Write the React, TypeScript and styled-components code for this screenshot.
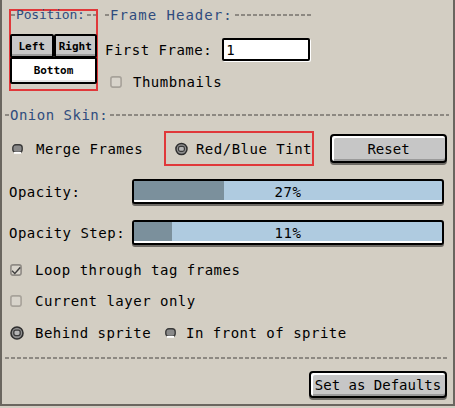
import React from "react";
import styled, { createGlobalStyle } from "styled-components";

const GlobalStyle = createGlobalStyle`
  html, body { margin: 0; padding: 0; background: #d3cec3; }
  body {
    font-family: "DejaVu Sans Mono", "Liberation Mono", monospace;
    font-size: 14px;
    letter-spacing: 0.5px;
    color: #000;
  }
`;

const Panel = styled.div`
  width: 455px;
  height: 406px;
  box-sizing: border-box;
  padding: 0 4px 0 3px;
  background: #d3cec3;
  border-left: 2px solid #6a665f;
  border-right: 2px solid #6a665f;
  border-bottom: 2px solid #6a665f;
  display: flex;
  flex-direction: column;
`;

const TopRow = styled.div`
  display: flex;
  margin-top: 9px;
  padding-left: 4px;
  gap: 7px;
  height: 82px;
`;

const Highlight = styled.div`
  box-sizing: border-box;
  border: 2px solid #e0383a;
`;

const PositionBox = styled(Highlight)`
  width: 89px;
  height: 82px;
  display: flex;
  flex-direction: column;
`;

const SectionLabel = styled.div<{ $top?: number; $spacing?: number; $size?: number }>`
  display: flex;
  align-items: center;
  height: 14px;
  margin-top: ${(p) => p.$top ?? 0}px;
  color: #2f4c7e;
  line-height: 14px;
  font-size: ${(p) => p.$size ?? 14}px;
  letter-spacing: ${(p) => p.$spacing ?? 0.5}px;
  white-space: nowrap;
  &::before {
    content: "";
    width: 4px;
    height: 2px;
    margin-right: 1px;
    background: #8d8982;
  }
  &::after {
    content: "";
    flex: 1;
    height: 2px;
    margin-left: 2px;
    background: repeating-linear-gradient(90deg, #8d8982 0 4px, transparent 4px 6px);
  }
`;

const ButtonGrid = styled.div`
  display: grid;
  grid-template-columns: 1fr 1fr;
  grid-template-rows: 24px 26px;
  margin: 12px 0 0 -1px;
  width: 87px;
`;

const MiniButton = styled.div<{ $active?: boolean; $wide?: boolean }>`
  grid-column: ${(p) => (p.$wide ? "span 2" : "auto")};
  box-sizing: border-box;
  display: flex;
  align-items: center;
  justify-content: center;
  border: 2px solid #000;
  margin-top: ${(p) => (p.$wide ? "-1px" : "0")};
  background: ${(p) => (p.$active ? "#fff" : "#c8c8c8")};
  box-shadow: inset 0 -2px 0 ${(p) => (p.$active ? "#e6e6e6" : "#9d9d9d")};
  font-size: 11px;
  letter-spacing: 0;
  font-weight: bold;
  border-radius: 2px;
`;

const FrameHeaderGroup = styled.div`
  width: 208px;
  display: flex;
  flex-direction: column;
`;

const FieldRow = styled.div`
  display: flex;
  align-items: center;
  height: 23px;
  margin-top: 16px;
  gap: 10px;
`;

const NumberInput = styled.div`
  width: 88px;
  height: 23px;
  box-sizing: border-box;
  border: 2px solid #000;
  border-radius: 2px;
  background: #fff;
  display: flex;
  align-items: center;
  padding-left: 2px;
  box-shadow: 1px 1px 0 #fff;
`;

const OptionRow = styled.div<{ $top: number; $pad?: number; $gap?: number }>`
  display: flex;
  align-items: center;
  height: 24px;
  margin-top: ${(p) => p.$top}px;
  padding-left: ${(p) => p.$pad ?? 5}px;
  gap: ${(p) => p.$gap ?? 13}px;
  white-space: nowrap;
`;

const TintRow = styled.div`
  display: flex;
  align-items: center;
  height: 35px;
  margin-top: 9px;
  padding-left: 7px;
`;

const RadioItem = styled.div<{ $gap: number; $width?: number }>`
  display: flex;
  align-items: center;
  gap: ${(p) => p.$gap}px;
  width: ${(p) => (p.$width ? `${p.$width}px` : "auto")};
  white-space: nowrap;
`;

const TintBox = styled(Highlight)`
  width: 150px;
  height: 35px;
  margin-left: auto;
  padding-left: 9px;
  display: flex;
  align-items: center;
  gap: 8px;
  white-space: nowrap;
`;

const Button = styled.div<{ $width: number; $height: number }>`
  width: ${(p) => p.$width}px;
  height: ${(p) => p.$height}px;
  box-sizing: border-box;
  border: 2px solid #000;
  border-radius: 4px;
  background: #c6c6c6;
  display: flex;
  align-items: center;
  justify-content: center;
  letter-spacing: 0;
  box-shadow: inset 2px 2px 0 #fff, inset 0 -2px 0 #9a9a9a, 0 2px 0 #6d6a65;
`;

const ResetButton = styled(Button)`
  margin-left: 16px;
  margin-right: 2px;
`;

const SliderRow = styled.div<{ $top: number }>`
  display: grid;
  grid-template-columns: 127px 312px;
  align-items: center;
  height: 25px;
  margin-top: ${(p) => p.$top}px;
`;

const SliderLabel = styled.div`
  padding-left: 4px;
  white-space: nowrap;
`;

const SliderTrack = styled.div`
  position: relative;
  height: 25px;
  box-sizing: border-box;
  border: 2px solid #000;
  border-radius: 3px;
  background: #afcbe0;
  overflow: hidden;
  box-shadow: 0 2px 0 #6d6a65;
  display: flex;
  align-items: center;
  justify-content: center;
  &::after {
    content: "";
    position: absolute;
    left: 0;
    right: 0;
    bottom: 0;
    height: 2px;
    background: #fff;
  }
`;

const SliderFill = styled.div`
  position: absolute;
  left: 0;
  top: 0;
  bottom: 2px;
  background: #7b909c;
`;

const SliderValue = styled.span`
  position: relative;
  z-index: 1;
`;

const Divider = styled.div`
  height: 2px;
  margin-top: 12px;
  background: repeating-linear-gradient(90deg, #8d8982 0 4px, transparent 4px 6px);
`;

const Footer = styled.div`
  display: flex;
  justify-content: flex-end;
  margin-top: 12px;
  padding-right: 2px;
`;

function Radio({ checked }: { checked?: boolean }) {
  if (checked) {
    return (
      <svg width="14" height="14" viewBox="0 0 14 14">
        <circle cx="7" cy="7" r="6" fill="#8f8f8f" stroke="#2e2e2e" strokeWidth="1.6" />
        <rect x="3.8" y="4.2" width="6.4" height="5.4" rx="2" fill="#b5b5b5" stroke="#3a3a3a" strokeWidth="1.3" />
      </svg>
    );
  }
  return (
    <svg width="11" height="10" viewBox="0 0 11 10">
      <rect x="0.8" y="0.8" width="9.4" height="7.6" rx="3" fill="#8a8a8a" stroke="#3a3a3a" strokeWidth="1.4" />
      <rect x="2" y="8" width="7" height="1.8" fill="#fff" />
    </svg>
  );
}

function CheckBox({ checked }: { checked?: boolean }) {
  return (
    <svg width="12" height="12" viewBox="0 0 12 12">
      <rect x="0.9" y="0.9" width="10.2" height="10.2" rx="2" fill="#d8d4cb" stroke={checked ? "#8f8b85" : "#a7a29a"} strokeWidth="1.6" />
      {checked && <path d="M2.5 6.2 L4.8 8.6 L9.8 2.8 L10.8 4 L4.8 10.4 L1.6 7.2 Z" fill="#3e3e3e" />}
    </svg>
  );
}

function Slider({ label, value, top }: { label: string; value: number; top: number }) {
  return (
    <SliderRow $top={top}>
      <SliderLabel>{label}</SliderLabel>
      <SliderTrack>
        <SliderFill style={{ width: `${value * 1.04 + 1}%` }} />
        <SliderValue>{value}%</SliderValue>
      </SliderTrack>
    </SliderRow>
  );
}

export default function App() {
  return (
    <>
      <GlobalStyle />
      <Panel>
        <TopRow>
          <PositionBox>
            <SectionLabel $top={-3} $size={13} $spacing={-0.2}>Position:</SectionLabel>
            <ButtonGrid>
              <MiniButton>Left</MiniButton>
              <MiniButton>Right</MiniButton>
              <MiniButton $wide $active>Bottom</MiniButton>
            </ButtonGrid>
          </PositionBox>
          <FrameHeaderGroup>
            <SectionLabel $top={-1} $spacing={1}>Frame Header:</SectionLabel>
            <FieldRow>
              <span>First Frame:</span>
              <NumberInput>1</NumberInput>
            </FieldRow>
            <OptionRow $top={12} $gap={11}>
              <CheckBox />
              <span>Thumbnails</span>
            </OptionRow>
          </FrameHeaderGroup>
        </TopRow>

        <SectionLabel $top={17}>Onion Skin:</SectionLabel>

        <TintRow>
          <RadioItem $gap={13}>
            <Radio />
            <span>Merge Frames</span>
          </RadioItem>
          <TintBox>
            <Radio checked />
            <span>Red/Blue Tint</span>
          </TintBox>
          <ResetButton $width={117} $height={29}>Reset</ResetButton>
        </TintRow>

        <Slider label="Opacity:" value={27} top={13} />
        <Slider label="Opacity Step:" value={11} top={16} />

        <OptionRow $top={13}>
          <CheckBox checked />
          <span>Loop through tag frames</span>
        </OptionRow>
        <OptionRow $top={7}>
          <CheckBox />
          <span>Current layer only</span>
        </OptionRow>
        <OptionRow $top={8} $gap={0}>
          <RadioItem $gap={11} $width={155}>
            <Radio checked />
            <span>Behind sprite</span>
          </RadioItem>
          <RadioItem $gap={10}>
            <Radio />
            <span>In front of sprite</span>
          </RadioItem>
        </OptionRow>

        <Divider />
        <Footer>
          <Button $width={138} $height={27}>Set as Defaults</Button>
        </Footer>
      </Panel>
    </>
  );
}
